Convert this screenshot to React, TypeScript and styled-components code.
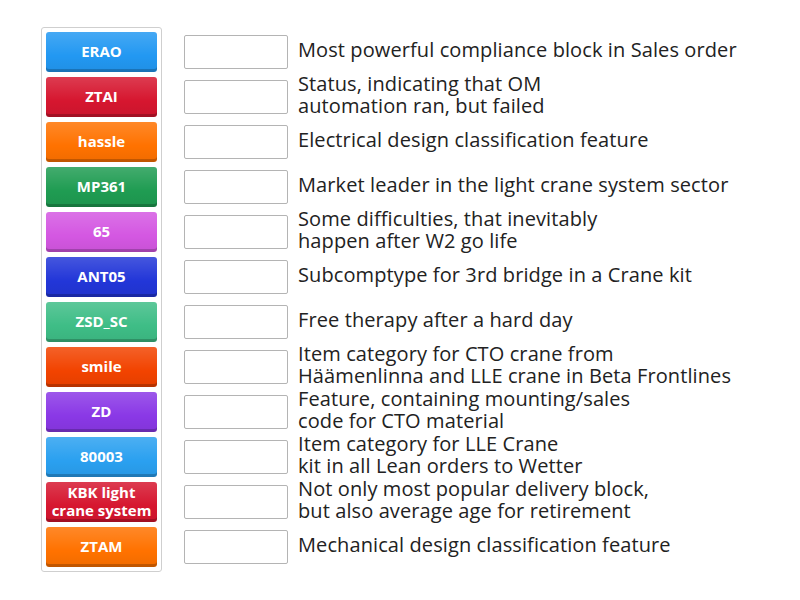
import styled, { createGlobalStyle } from 'styled-components'

const GlobalStyle = createGlobalStyle`
  body {
    margin: 0;
    background: #fff;
    font-family: 'Open Sans', 'Noto Sans', sans-serif;
  }
`

const Page = styled.div`
  display: flex;
  align-items: flex-start;
  padding: 27px 0 0 41px;
`

const TilePanel = styled.div`
  display: flex;
  flex-direction: column;
  gap: 5px;
  padding: 4px;
  border: 1px solid #cfcfcf;
  border-radius: 3px;
  background: #fff;
`

const Tile = styled.div<{ $color: string }>`
  width: 111px;
  height: 40px;
  box-sizing: border-box;
  display: flex;
  align-items: center;
  justify-content: center;
  text-align: center;
  border-radius: 3px;
  background-image: linear-gradient(
    to bottom,
    rgba(255, 255, 255, 0.16) 0%,
    rgba(255, 255, 255, 0) 60%,
    rgba(0, 0, 0, 0.06) 100%
  );
  background-color: ${(p) => p.$color};
  box-shadow: inset 0 -3px 0 rgba(0, 0, 0, 0.2);
  color: #fff;
  font-weight: 700;
  font-size: 15px;
  line-height: 18px;
  padding: 0 2px 3px;
`

const Answers = styled.div`
  display: flex;
  flex-direction: column;
  gap: 5px;
  margin-left: 22px;
  padding-top: 5px;
`

const Row = styled.div`
  height: 40px;
  display: flex;
  align-items: center;
`

const Slot = styled.div`
  width: 104px;
  height: 34px;
  box-sizing: border-box;
  border: 1px solid #b4b4b4;
  border-radius: 2px;
  background: #fff;
  flex-shrink: 0;
`

const Clue = styled.div`
  margin: 0 0 5px 10px;
  font-size: 20px;
  line-height: 22px;
  letter-spacing: 0.1px;
  color: #222;
  white-space: nowrap;
`

const items = [
  { label: 'ERAO', color: '#2298f2', clue: ['Most powerful compliance block in Sales order'] },
  { label: 'ZTAI', color: '#d6162f', clue: ['Status, indicating that OM', 'automation ran, but failed'] },
  { label: 'hassle', color: '#ff7200', clue: ['Electrical design classification feature'] },
  { label: 'MP361', color: '#1f9c52', clue: ['Market leader in the light crane system sector'] },
  { label: '65', color: '#d457e2', clue: ['Some difficulties, that inevitably', 'happen after W2 go life'] },
  { label: 'ANT05', color: '#2236d8', clue: ['Subcomptype for 3rd bridge in a Crane kit'] },
  { label: 'ZSD_SC', color: '#3ebd86', clue: ['Free therapy after a hard day'] },
  { label: 'smile', color: '#f24300', clue: ['Item category for CTO crane from', 'Häämenlinna and LLE crane in Beta Frontlines'] },
  { label: 'ZD', color: '#8a38e6', clue: ['Feature, containing mounting/sales', 'code for CTO material'] },
  { label: '80003', color: '#2aa0f0', clue: ['Item category for LLE Crane', 'kit in all Lean orders to Wetter'] },
  { label: 'KBK light crane system', color: '#d6162f', clue: ['Not only most popular delivery block,', 'but also average age for retirement'] },
  { label: 'ZTAM', color: '#ff7200', clue: ['Mechanical design classification feature'] },
]

export default function App() {
  return (
    <>
      <GlobalStyle />
      <Page>
        <TilePanel>
          {items.map((it) => (
            <Tile key={it.label} $color={it.color}>
              {it.label}
            </Tile>
          ))}
        </TilePanel>
        <Answers>
          {items.map((it) => (
            <Row key={it.label}>
              <Slot />
              <Clue>
                {it.clue.map((line, i) => (
                  <div key={i}>{line}</div>
                ))}
              </Clue>
            </Row>
          ))}
        </Answers>
      </Page>
    </>
  )
}
